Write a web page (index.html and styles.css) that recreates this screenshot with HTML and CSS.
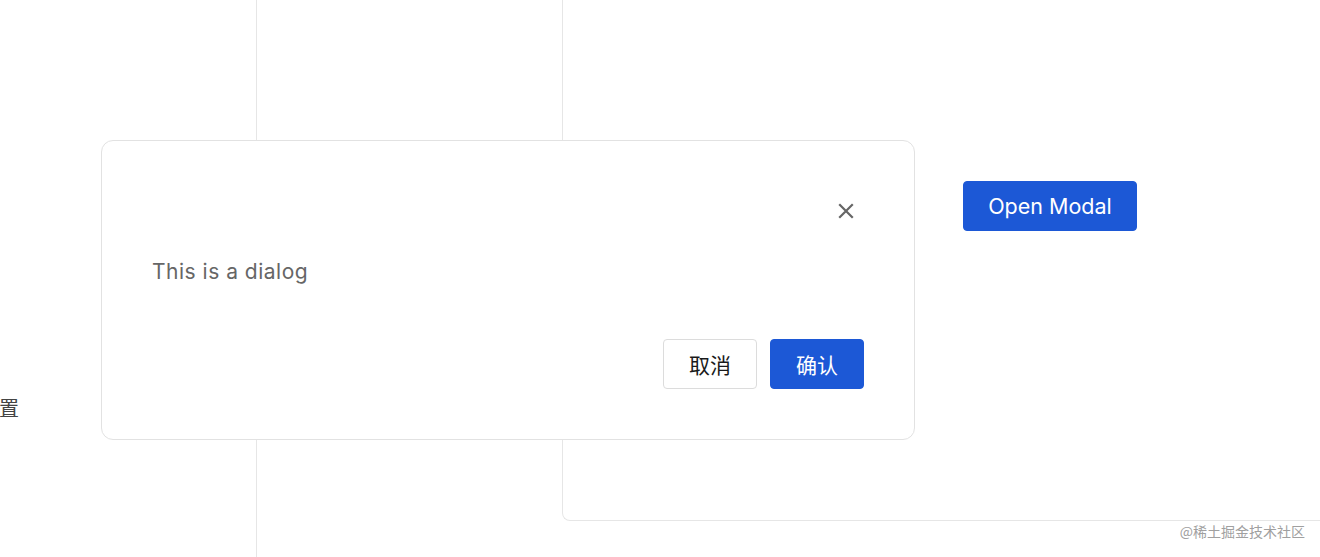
FILE: index.html
```html
<!DOCTYPE html>
<html lang="zh-CN">
<head>
<meta charset="utf-8">
<title>Modal</title>
<link rel="stylesheet" href="styles.css">
</head>
<body>
<div class="layout">
  <aside class="sidebar">
    <div class="menu-item">置</div>
  </aside>
  <section class="middle"></section>
  <main class="content">
    <button class="btn btn-primary btn-open">Open Modal</button>
  </main>
</div>

<div class="dialog" role="dialog">
  <div class="dialog-header">
    <button class="dialog-close" aria-label="close">
      <svg width="16" height="16" viewBox="0 0 16 16"><path d="M2 2L14 14M14 2L2 14" stroke="#666" stroke-width="2.2" stroke-linecap="square"/></svg>
    </button>
  </div>
  <div class="dialog-body">This is a dialog</div>
  <div class="dialog-footer">
    <button class="btn btn-default">取消</button>
    <button class="btn btn-primary">确认</button>
  </div>
</div>

<div class="watermark">@稀土掘金技术社区</div>
</body>
</html>
```

FILE: styles.css
```css
html, body {
  margin: 0;
  padding: 0;
  background: #fff;
  overflow: hidden;
}
body {
  width: 1320px;
  height: 557px;
  position: relative;
  font-family: "Noto Sans", "Noto Sans CJK SC", sans-serif;
}
.layout {
  display: flex;
  height: 557px;
  width: 1320px;
  overflow: hidden;
}
.sidebar {
  width: 256px;
  flex: none;
  border-right: 1px solid #e6e6e6;
  position: relative;
}
.menu-item {
  margin-top: 394px;
  margin-left: -1px;
  font-size: 20px;
  line-height: 28px;
  color: #444;
  font-family: "Noto Sans CJK SC", sans-serif;
}
.middle {
  width: 305px;
  flex: none;
}
.content {
  flex: none;
  width: 900px;
  height: 521px;
  border-left: 1px solid #e6e6e6;
  border-bottom: 1px solid #e6e6e6;
  border-bottom-left-radius: 8px;
  padding: 181px 0 0 400px;
  box-sizing: border-box;
}
.btn {
  font-family: "Noto Sans CJK SC", sans-serif;
  height: 50px;
  border-radius: 4px;
  font-size: 21px;
  cursor: pointer;
  box-sizing: border-box;
  padding: 0;
}
.btn-primary {
  background: #1c58d6;
  border: 1px solid #1c58d6;
  color: #fff;
}
.btn-default {
  background: #fff;
  border: 1px solid #dcdcdc;
  color: #1a1a1a;
}
.btn-open {
  width: 174px;
  font-family: "Inter", "Noto Sans", sans-serif;
  font-size: 21.5px;
}
.dialog {
  position: absolute;
  left: 101px;
  top: 140px;
  width: 814px;
  height: 300px;
  box-sizing: border-box;
  border: 1px solid #e2e2e2;
  border-radius: 12px;
  background: #fff;
  padding: 51px 50px 50px 50px;
  display: flex;
  flex-direction: column;
}
.dialog-header {
  display: flex;
  justify-content: flex-end;
  height: 38px;
}
.dialog-close {
  width: 36px;
  height: 38px;
  border: 0;
  background: transparent;
  padding: 0;
  display: flex;
  align-items: center;
  justify-content: center;
  cursor: pointer;
}
.dialog-body {
  margin-top: 27px;
  font-family: "Inter", "Noto Sans", sans-serif;
  font-size: 21px;
  letter-spacing: 0.5px;
  line-height: 30px;
  color: #666;
}
.dialog-footer {
  margin-top: auto;
  display: flex;
  justify-content: flex-end;
  gap: 13px;
}
.dialog-footer .btn {
  width: 94px;
}
.watermark {
  position: absolute;
  right: 15px;
  top: 521px;
  font-family: "Noto Sans CJK SC", sans-serif;
  font-size: 14px;
  line-height: 20px;
  color: #a0a0a0;
}
```
